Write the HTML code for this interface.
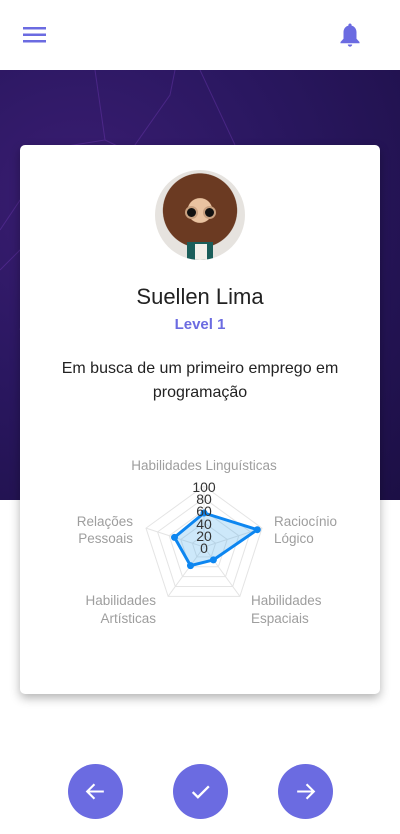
<!DOCTYPE html>
<html><head><meta charset="utf-8"><style>
*{margin:0;padding:0;box-sizing:border-box}
body{width:400px;height:834px;background:#fff;font-family:"Liberation Sans",sans-serif;position:relative;overflow:hidden}
.hero{position:absolute;left:0;top:70px;width:400px;height:430px;background:radial-gradient(ellipse at 20% 30%,#3a1d72 0%,#2a1760 45%,#1c0f45 100%)}
.card{position:absolute;left:20px;top:145px;width:360px;height:549px;background:#fff;border-radius:5px;box-shadow:0 4px 10px rgba(0,0,0,.3)}
.t{position:absolute;width:100%;text-align:center}
.btn{position:absolute;top:764px;width:55px;height:55px;border-radius:50%;background:#6b6be1}
.btn svg{position:absolute;left:15px;top:15px}
</style></head><body>
<svg style="position:absolute;left:23px;top:27px" width="24" height="16"><rect x="0" y="0" width="23" height="2.5" fill="#6b6be1"/><rect x="0" y="6.5" width="23" height="2.5" fill="#6b6be1"/><rect x="0" y="13" width="23" height="2.5" fill="#6b6be1"/></svg>
<svg style="position:absolute;left:339px;top:22px" width="22" height="26" viewBox="0 0 22 26"><path d="M11 1.5c1 0 1.6.7 1.6 1.6v.5C15.7 4.4 17.5 7 17.5 10.2v6.5L20.5 20v1.2h-19V20l3-3.3v-6.5C4.5 7 6.3 4.4 9.4 3.6v-.5c0-.9.6-1.6 1.6-1.6z" fill="#6b6be1"/><path d="M8.8 22.5h4.4a2.2 2.2 0 0 1-4.4 0z" fill="#6b6be1"/></svg>
<div class="hero">
<svg width="400" height="430" style="position:absolute;left:0;top:0"><g stroke="#7a3fc0" stroke-width="1" fill="none" opacity=".35"><path d="M95 0 L105 70 L55 78 L0 160"/><path d="M175 0 L170 25 L130 82 L105 70"/><path d="M200 0 L235 75"/><path d="M0 200 L40 160 L20 260"/></g></svg>
</div>
<div class="card">
<div style="position:absolute;left:135px;top:25px;width:90px;height:90px;border-radius:50%;background:radial-gradient(circle at 50% 45%,#e9c2a0 0 18%,#6b3a22 19% 55%,#e6e3df 56%);overflow:hidden">
<div style="position:absolute;left:30px;top:36px;width:13px;height:13px;border-radius:50%;background:#111;border:2px solid #c8a080"></div>
<div style="position:absolute;left:48px;top:36px;width:13px;height:13px;border-radius:50%;background:#111;border:2px solid #c8a080"></div>
<div style="position:absolute;left:32px;top:72px;width:26px;height:20px;background:#1b5e5a"></div>
<div style="position:absolute;left:40px;top:74px;width:12px;height:16px;background:#f3f0ea"></div>
</div>
<div class="t" style="top:139px;font-size:22px;color:#222">Suellen Lima</div>
<div class="t" style="top:171px;font-size:15px;font-weight:bold;color:#6b6be1">Level 1</div>
<div class="t" style="top:212px;font-size:16px;line-height:24px;color:#222">Em busca de um primeiro emprego em<br>programação</div>
</div>
<svg style="position:absolute;left:0;top:0" width="400" height="834">
<g transform="translate(204,547)" fill="none" stroke="#e4e4e4" stroke-width="1">
<polygon points="0,-12.2 11.6,-3.77 7.17,9.87 -7.17,9.87 -11.6,-3.77"/>
<polygon points="0,-24.4 23.2,-7.54 14.35,19.74 -14.35,19.74 -23.2,-7.54"/>
<polygon points="0,-36.6 34.8,-11.3 21.5,29.6 -21.5,29.6 -34.8,-11.3"/>
<polygon points="0,-48.8 46.4,-15.1 28.7,39.5 -28.7,39.5 -46.4,-15.1"/>
<polygon points="0,-61 58,-18.85 35.87,49.35 -35.87,49.35 -58,-18.85"/>
<path d="M0 0L0 -61M0 0L58 -18.85M0 0L35.87 49.35M0 0L-35.87 49.35M0 0L-58 -18.85"/>
<polygon points="0,-34 53.3,-17.3 9.4,12.9 -13.5,18.6 -29.5,-9.6" fill="rgba(54,162,235,.25)" stroke="#0d86f0" stroke-width="3"/>
<g fill="#0d86f0" stroke="none"><circle cx="0" cy="-34" r="3.5"/><circle cx="53.3" cy="-17.3" r="3.5"/><circle cx="9.4" cy="12.9" r="3.5"/><circle cx="-13.5" cy="18.6" r="3.5"/><circle cx="-29.5" cy="-9.6" r="3.5"/></g>
</g>
<g font-family="Liberation Sans, sans-serif" font-size="14" fill="#333" text-anchor="middle">
<text x="204" y="492">100</text><text x="204" y="504">80</text><text x="204" y="516">60</text><text x="204" y="529">40</text><text x="204" y="541">20</text><text x="204" y="553">0</text>
</g>
<g font-family="Liberation Sans, sans-serif" font-size="13.5" fill="#9e9e9e">
<text x="204" y="470" text-anchor="middle">Habilidades Linguísticas</text>
<text x="274" y="526">Raciocínio</text><text x="274" y="543">Lógico</text>
<text x="251" y="605">Habilidades</text><text x="251" y="623">Espaciais</text>
<text x="156" y="605" text-anchor="end">Habilidades</text><text x="156" y="623" text-anchor="end">Artísticas</text>
<text x="133" y="526" text-anchor="end">Relações</text><text x="133" y="543" text-anchor="end">Pessoais</text>
</g>
</svg>
<div class="btn" style="left:68px"><svg width="25" height="25" viewBox="0 0 24 24"><path d="M20 12H5M11 5l-7 7 7 7" stroke="#fff" stroke-width="2" fill="none"/></svg></div>
<div class="btn" style="left:173px"><svg width="25" height="25" viewBox="0 0 24 24"><path d="M4.5 12.5l5 5L20 7" stroke="#fff" stroke-width="2.2" fill="none"/></svg></div>
<div class="btn" style="left:278px"><svg width="25" height="25" viewBox="0 0 24 24"><path d="M4 12h15M13 5l7 7-7 7" stroke="#fff" stroke-width="2" fill="none"/></svg></div>
</body></html>
